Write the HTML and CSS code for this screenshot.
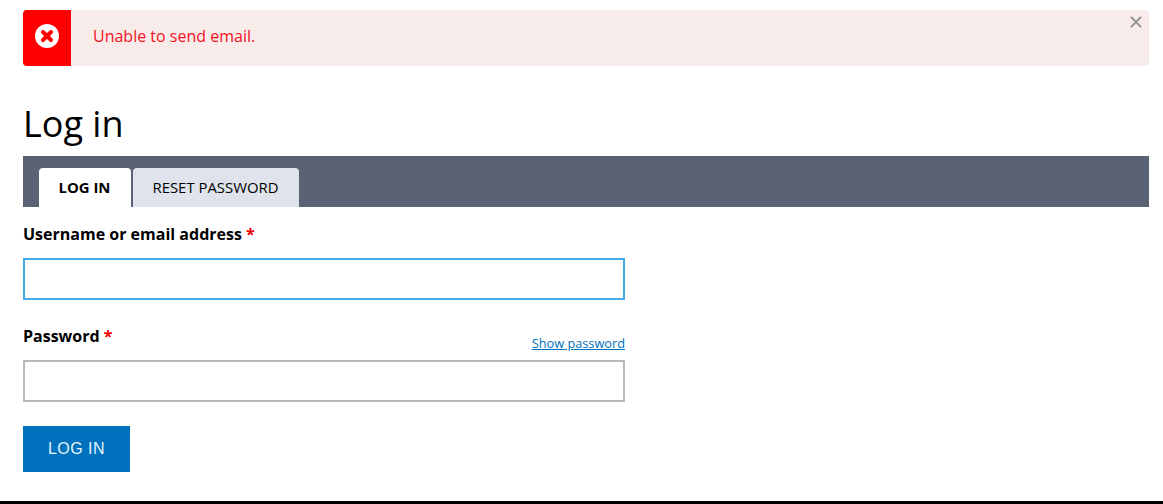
FILE: index.html
```html
<!DOCTYPE html>
<html lang="en">
<head>
<meta charset="utf-8">
<title>Log in</title>
<link rel="stylesheet" href="styles.css">
</head>
<body>
<div class="page">
  <div class="alert">
    <div class="alert-icon">
      <svg width="24" height="24" viewBox="0 0 24 24"><circle cx="12" cy="12" r="12" fill="#fff"/><path d="M8 8l8 8M16 8l-8 8" stroke="#f00" stroke-width="4" stroke-linecap="round"/></svg>
    </div>
    <div class="alert-text">Unable to send email.</div>
    <svg class="alert-close" width="12" height="12" viewBox="0 0 12 12"><path d="M1 1l10 10M11 1L1 11" stroke="#999" stroke-width="2"/></svg>
  </div>
  <h1 class="title">Log in</h1>
  <div class="tabs">
    <a class="tab tab-active">LOG IN</a>
    <a class="tab">RESET PASSWORD</a>
  </div>
  <form class="form">
    <div class="label-row"><label class="label">Username or email address <span class="req">*</span></label></div>
    <input class="input input-focus" type="text">
    <div class="label-row label-row-pass"><label class="label">Password <span class="req">*</span></label><a class="show">Show password</a></div>
    <input class="input" type="password">
    <button class="submit" type="button">LOG IN</button>
  </form>
</div>
<div class="footer-line"></div>
</body>
</html>
```
FILE: styles.css
```css
* { box-sizing: border-box; }
html, body { margin: 0; padding: 0; height: 504px; overflow: hidden; background: #fff; }
body { font-family: "Open Sans", sans-serif; color: #000; position: relative; }
.page { padding: 10px 14px 0 23px; }
.alert { position: relative; display: flex; align-items: center; height: 56px; background: #f8eceb; border-radius: 4px; overflow: hidden; }
.alert-icon { width: 48px; height: 56px; padding-bottom: 4px; background: #f00; display: flex; align-items: center; justify-content: center; }
.alert-text { margin: 0 0 4px 22px; font-size: 16px; line-height: 24px; color: #f5101e; }
.alert-close { position: absolute; top: 6px; right: 7px; }
.title { margin: 32px 0 0; font-size: 36px; font-weight: 400; line-height: 52px; height: 58px; }
.tabs { display: flex; gap: 2px; height: 51px; background: #5a6373; padding: 12px 0 0 16px; }
.tab { display: flex; align-items: center; justify-content: center; height: 39px; padding: 0 1px 2px 0; font-size: 14.9px; background: #dfe3ec; border-radius: 4px 4px 0 0; width: 166px; }
.tab-active { background: #fff; font-weight: 700; width: 92px; }
.form { display: flex; flex-direction: column; align-items: flex-start; width: 602px; }
.label-row { display: flex; justify-content: space-between; align-items: flex-end; width: 100%; margin-top: 16px; height: 22px; }
.label-row-pass { margin-top: 25px; height: 27px; }
.label { font-size: 16px; font-weight: 700; line-height: 22px; }
.label-row-pass .label { align-self: flex-start; }
.req { color: #e00; }
.show { font-size: 12.75px; line-height: 18px; color: #0071bc; text-decoration: underline; }
.input { width: 602px; height: 42px; margin-top: 13px; border: 2px solid #b9b9b9; background: #fff; display: block; outline: none; }
.label-row-pass + .input { margin-top: 8px; }
.input-focus { border-color: #45ade5; }
.submit { margin-top: 24px; width: 107px; height: 46px; border: 0; background: #0071bc; color: #e8f3fa; font-family: "Liberation Sans", sans-serif; font-size: 16px; letter-spacing: .5px; padding: 0; }
.footer-line { position: absolute; left: 0; right: 0; bottom: 0; height: 3px; background: #000; }
```
